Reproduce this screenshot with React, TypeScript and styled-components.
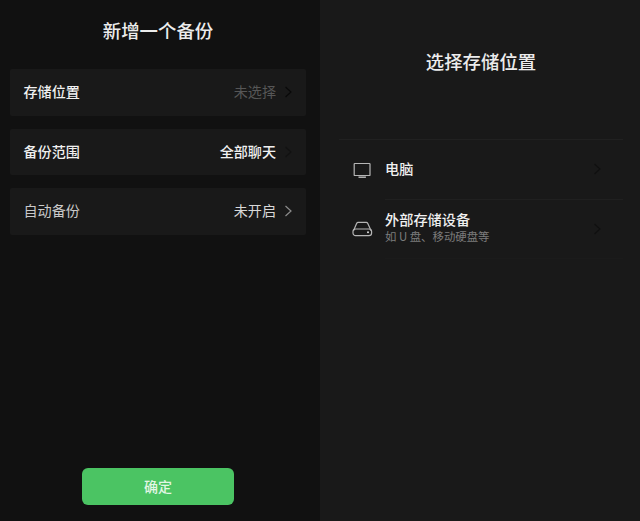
import React from "react";
import styled, { createGlobalStyle } from "styled-components";

const GlobalStyle = createGlobalStyle`
  * {
    box-sizing: border-box;
    margin: 0;
    padding: 0;
  }
  body {
    background-color: #111111;
    font-family: "Noto Sans CJK SC", "Noto Sans", sans-serif;
  }
`;

const Container = styled.main`
  display: flex;
  width: 640px;
  height: 521px;
  overflow: hidden;
`;

const BackupPanel = styled.section`
  display: flex;
  flex-direction: column;
  width: 320px;
  padding: 16px 14px 16px 10px;
  background-color: #111111;
`;

const LocationPanel = styled.section`
  width: 320px;
  padding: 47px 17px 0 19px;
  background-color: #191919;
`;

const Title = styled.h1`
  color: #ececec;
  font-size: 18.4px;
  font-weight: 500;
  line-height: 28px;
  text-align: center;
`;

const Settings = styled.ul`
  display: flex;
  flex-direction: column;
  gap: 13px;
  margin-top: 25px;
  list-style: none;
`;

const Setting = styled.li`
  display: flex;
  align-items: center;
  height: 46.5px;
  padding: 0 13px 0 13.5px;
  border-radius: 2px;
  background-color: #191919;
  font-size: 14.1px;
  line-height: 20px;
`;

const Label = styled.span<{ $dim?: boolean }>`
  flex: 1;
  padding-bottom: 2px;
  color: ${(props) => (props.$dim ? "#c9c9c9" : "#f0f0f0")};
  font-weight: ${(props) => (props.$dim ? 400 : 500)};
`;

const Value = styled.span<{ $color: string; $bold?: boolean }>`
  margin-right: 8px;
  padding-bottom: 2px;
  color: ${(props) => props.$color};
  font-weight: ${(props) => (props.$bold ? 500 : 400)};
`;

const ConfirmBtn = styled.button`
  width: 152px;
  height: 37px;
  margin: auto auto 0 72px;
  padding-bottom: 2px;
  border: none;
  border-radius: 6px;
  background-color: #4bc463;
  color: #e3f6e5;
  font-family: inherit;
  font-size: 14px;
  line-height: 20px;
  font-weight: 500;
  cursor: pointer;
`;

const Devices = styled.ul`
  margin-top: 64px;
  border-top: 1px solid #212121;
  list-style: none;
`;

const Device = styled.li`
  display: flex;
  align-items: center;
  height: 59.5px;
  padding-left: 12px;
`;

const DeviceBody = styled.div<{ $divided?: boolean }>`
  display: flex;
  flex: 1;
  align-items: center;
  justify-content: space-between;
  height: 100%;
  margin-left: 12px;
  padding-right: 21px;
  border-bottom: 1px solid ${(props) => (props.$divided ? "#202020" : "#1b1b1b")};
`;

const DeviceText = styled.div`
  padding-bottom: 3px;
`;

const DeviceName = styled.p`
  color: #f0f0f0;
  font-size: 14.2px;
  font-weight: 500;
  line-height: 18px;
`;

const DeviceHint = styled.p`
  color: #7c7c7c;
  font-size: 11.4px;
  line-height: 17px;
`;

const Icon = styled.svg`
  display: block;
  flex: none;
  fill: none;
`;

function Chevron({ color }: { color: string }) {
  return (
    <Icon width="9" height="12" viewBox="0 0 9 12" stroke={color} strokeWidth="1.2">
      <path d="M1.5 1 7 6l-5.5 5" />
    </Icon>
  );
}

function ComputerIcon() {
  return (
    <Icon width="22" height="20" viewBox="0 0 22 20" stroke="#b5b5b5">
      <rect x="3.2" y="3.5" width="15.8" height="12" rx="0.6" strokeWidth="1.2" />
      <path d="M7.5 17.2h7.4" strokeWidth="1.5" />
    </Icon>
  );
}

function DriveIcon() {
  return (
    <Icon width="22" height="20" viewBox="0 0 22 20" stroke="#b5b5b5" strokeWidth="1.2">
      <path d="M2.5 11.8 5.6 4.4Q6.1 3.3 7.2 3.3h8Q16.3 3.3 16.8 4.4l3.3 7.4" />
      <rect x="2" y="10" width="18.6" height="6.6" rx="2.6" />
      <circle cx="17" cy="13.3" r="1" fill="#dddddd" stroke="none" />
    </Icon>
  );
}

const settings = [
  { label: "存储位置", value: "未选择", color: "#565656", arrow: "#090909" },
  { label: "备份范围", value: "全部聊天", color: "#f0f0f0", arrow: "#121212", bold: true },
  { label: "自动备份", value: "未开启", color: "#d8d8d8", arrow: "#8c8c8c", dim: true },
];

function App() {
  return (
    <>
      <GlobalStyle />
      <Container>
        <BackupPanel>
          <Title>新增一个备份</Title>
          <Settings>
            {settings.map((item) => (
              <Setting key={item.label}>
                <Label $dim={item.dim}>{item.label}</Label>
                <Value $color={item.color} $bold={item.bold}>
                  {item.value}
                </Value>
                <Chevron color={item.arrow} />
              </Setting>
            ))}
          </Settings>
          <ConfirmBtn>确定</ConfirmBtn>
        </BackupPanel>
        <LocationPanel>
          <Title>选择存储位置</Title>
          <Devices>
            <Device>
              <ComputerIcon />
              <DeviceBody $divided>
                <DeviceText>
                  <DeviceName>电脑</DeviceName>
                </DeviceText>
                <Chevron color="#101010" />
              </DeviceBody>
            </Device>
            <Device>
              <DriveIcon />
              <DeviceBody>
                <DeviceText>
                  <DeviceName>外部存储设备</DeviceName>
                  <DeviceHint>如 U 盘、移动硬盘等</DeviceHint>
                </DeviceText>
                <Chevron color="#101010" />
              </DeviceBody>
            </Device>
          </Devices>
        </LocationPanel>
      </Container>
    </>
  );
}

export default App;
